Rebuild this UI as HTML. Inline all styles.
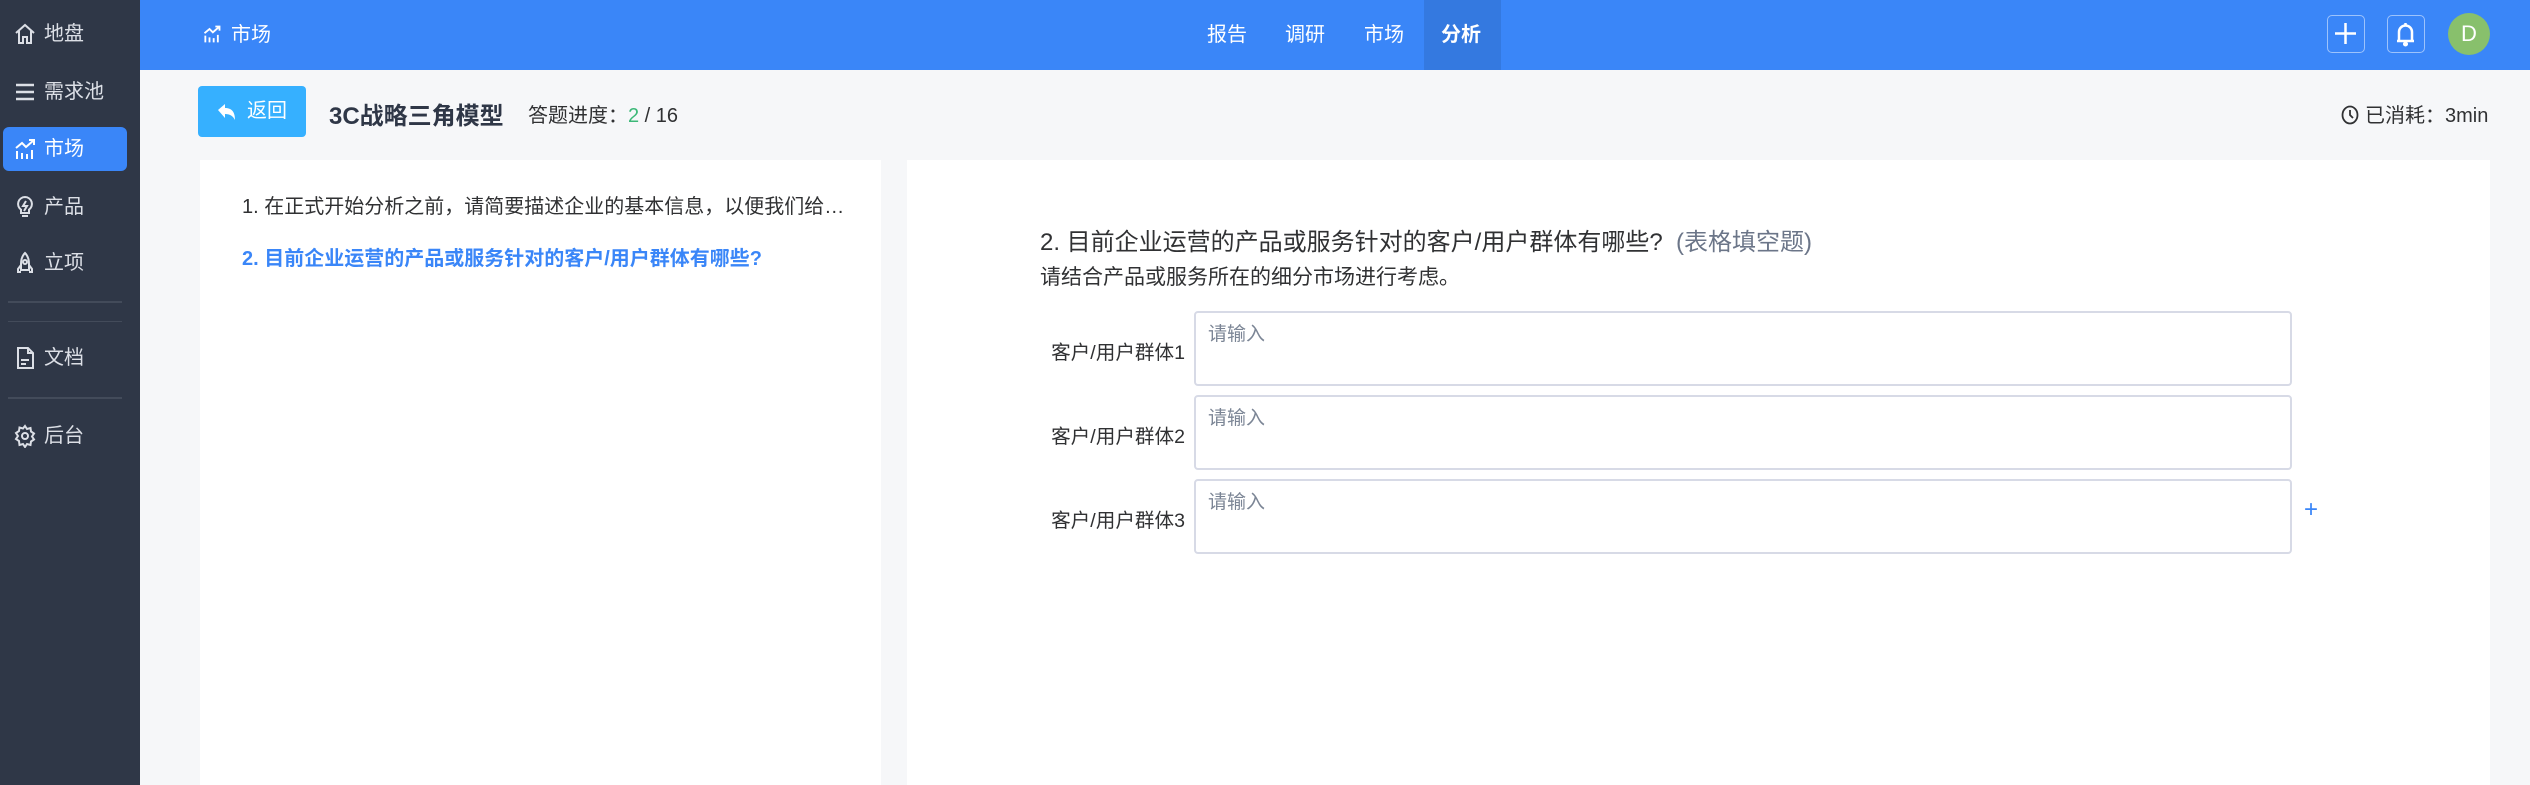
<!DOCTYPE html>
<html><head><meta charset="utf-8"><style>
*{box-sizing:border-box;margin:0;padding:0}
body{width:2530px;height:785px;overflow:hidden;background:#f6f7f9;font-family:"Liberation Sans","Noto Sans CJK SC",sans-serif;position:relative;color:#303133}
.abs{position:absolute}
#side{left:0;top:0;width:140px;height:785px;background:#2f3747}
.si{position:absolute;left:3px;width:124px;height:44px;color:#dcdfe6;font-size:20px;line-height:44px;padding-left:41px}
.si svg{position:absolute;left:10px;top:10px}
.si.act{background:#3a86f8;border-radius:6px;color:#fff}
.div{position:absolute;left:8px;width:114px;height:2px;background:#434b5a}
#hdr{left:140px;top:0;width:2390px;height:70px;background:#3a86f8}
.nav{position:absolute;top:0;height:70px;line-height:70px;color:#fff;font-size:20px}
.box{position:absolute;top:15px;width:38px;height:38px;border:1.5px solid rgba(255,255,255,.5);border-radius:5px}
.panel{background:#fff;top:160px;height:625px}
.lbl{position:absolute;left:1030px;width:155px;text-align:right;font-size:19.6px;color:#303133}
.ta{position:absolute;left:1194px;width:1098px;height:75px;border:2px solid #d7dae6;border-radius:4px;background:#fff;color:#7b8595;font-size:19px;padding:6px 12px}
</style></head><body>
<div id="side" class="abs">
 <div class="si" style="top:12px"><svg width="24" height="24" viewBox="0 0 24 24" fill="none" stroke="#dcdfe6" stroke-width="2"><path d="M3 11L12 3l9 8M6 9v12h4v-6h4v6h4V9"/></svg>地盘</div>
 <div class="si" style="top:70px"><svg width="24" height="24" viewBox="0 0 24 24" stroke="#dcdfe6" stroke-width="2.5"><path d="M3 5h18M3 12h18M3 19h18"/></svg>需求池</div>
 <div class="si act" style="top:127px"><svg width="24" height="24" viewBox="0 0 24 24" fill="none" stroke="#fff" stroke-width="2"><path d="M4 22v-8M9 22v-6M14 22v-5M19 22v-9M3 11l6-5 4 4 8-7M16 3h5v5"/></svg>市场</div>
 <div class="si" style="top:185px"><svg width="24" height="24" viewBox="0 0 24 24" fill="none" stroke="#dcdfe6" stroke-width="2"><path d="M12 2a7 7 0 0 0-4 12.7V18h8v-3.3A7 7 0 0 0 12 2zM9 21h6M13 6l-3 5h4l-3 5"/></svg>产品</div>
 <div class="si" style="top:241px"><svg width="24" height="24" viewBox="0 0 24 24" fill="none" stroke="#dcdfe6" stroke-width="2"><path d="M12 2c-3 3-4 7-4 11v6h8v-6c0-4-1-8-4-11zM8 14l-3 4v3h3M16 14l3 4v3h-3"/><circle cx="12" cy="11" r="2"/></svg>立项</div>
 <div class="div" style="top:301px"></div>
 <div class="div" style="top:321px;height:1px"></div>
 <div class="si" style="top:336px"><svg width="24" height="24" viewBox="0 0 24 24" fill="none" stroke="#dcdfe6" stroke-width="2"><path d="M5 2h10l5 5v15H5zM15 2v5h5M8 14h8M8 18h5"/></svg>文档</div>
 <div class="div" style="top:397px"></div>
 <div class="si" style="top:414px"><svg width="24" height="24" viewBox="0 0 24 24" fill="none" stroke="#dcdfe6" stroke-width="2"><circle cx="12" cy="12" r="3"/><path d="M12 2l2 3 3.5-1 .5 3.5 3 2-2 3 2 3-3 2-.5 3.5-3.5-1-2 3-2-3-3.5 1L6 17l-3-2 2-3-2-3 3-2 .5-3.5 3.5 1z"/></svg>后台</div>
</div>
<div id="hdr" class="abs">
 <svg class="abs" style="left:62px;top:24px" width="20" height="20" viewBox="0 0 24 24" fill="none" stroke="#fff" stroke-width="2.2"><path d="M4 22v-8M9 22v-6M14 22v-5M19 22v-9M3 11l6-5 4 4 8-7M16 3h5v5"/></svg>
 <div class="nav" style="left:91px">市场</div>
 <div class="abs" style="left:1284px;top:0;width:77px;height:70px;background:#3479e0"></div>
 <div class="nav" style="left:1067px">报告</div>
 <div class="nav" style="left:1145px">调研</div>
 <div class="nav" style="left:1224px">市场</div>
 <div class="nav" style="left:1301px;font-weight:bold">分析</div>
 <div class="box" style="left:2187px"><svg width="35" height="35" viewBox="0 0 35 35" stroke="#fff" stroke-width="2.5"><path d="M17.5 7v21M7 17.5h21"/></svg></div>
 <div class="box" style="left:2247px"><svg width="35" height="35" viewBox="0 0 35 35" fill="none" stroke="#fff" stroke-width="2.5"><path d="M11 25V16a6.5 6.5 0 0 1 13 0v9zM9 25h17M17.5 7v2.5"/><circle cx="17.5" cy="28" r="1.3" fill="#fff"/></svg></div>
 <div class="abs" style="left:2308px;top:13px;width:42px;height:42px;border-radius:50%;background:#88c06c;color:#fff;font-size:22px;text-align:center;line-height:42px">D</div>
</div>
<div class="abs" style="left:198px;top:86px;width:108px;height:51px;background:#36b0ff;border-radius:4px;color:#fff;font-size:20px;line-height:51px;padding-left:49px">
 <svg class="abs" style="left:19px;top:16px" width="20" height="20" viewBox="0 0 20 20"><path d="M1 8l7-6v4c6 0 10 3 10 12-2-4-5-6-10-6v4z" fill="#fff"/></svg>返回</div>
<div class="abs" style="left:329px;top:96px;font-size:24px;font-weight:bold;color:#2f3747">3C战略三角模型</div>
<div class="abs" style="left:528px;top:99px;font-size:20px;color:#303133">答题进度：<span style="color:#3cb878">2</span> / 16</div>
<div class="abs" style="left:2341px;top:99px;font-size:20px;color:#303133;white-space:nowrap"><svg style="vertical-align:-3px;margin-right:6px" width="18" height="20" viewBox="0 0 18 20" fill="none" stroke="#303133" stroke-width="1.8"><ellipse cx="9" cy="10" rx="7.5" ry="8.5"/><path d="M9 5v5l3 3"/></svg>已消耗：3min</div>
<div class="abs panel" style="left:200px;width:681px">
 <div class="abs" style="left:42px;top:30px;width:610px;overflow:hidden;text-overflow:ellipsis;font-size:20px;color:#303133;white-space:nowrap">1. 在正式开始分析之前，请简要描述企业的基本信息，以便我们给您提供更加准确的分析</div>
 <div class="abs" style="left:42px;top:82px;font-size:20px;color:#3a86f8;font-weight:bold;white-space:nowrap">2. 目前企业运营的产品或服务针对的客户/用户群体有哪些?</div>
</div>
<div class="abs panel" style="left:907px;width:1583px"></div>
<div class="abs" style="left:1040px;top:222px;font-size:24px;color:#303133;white-space:nowrap">2. 目前企业运营的产品或服务针对的客户/用户群体有哪些? &nbsp;<span style="color:#6b7588">(表格填空题)</span></div>
<div class="abs" style="left:1040px;top:261px;font-size:21px;color:#303133;white-space:nowrap">请结合产品或服务所在的细分市场进行考虑。</div>
<div class="lbl" style="top:336px">客户/用户群体1</div>
<div class="ta" style="top:311px">请输入</div>
<div class="lbl" style="top:420px">客户/用户群体2</div>
<div class="ta" style="top:395px">请输入</div>
<div class="lbl" style="top:504px">客户/用户群体3</div>
<div class="ta" style="top:479px">请输入</div>
<div class="abs" style="left:2304px;top:496px;font-size:24px;color:#3a86f8">+</div>
</body></html>
